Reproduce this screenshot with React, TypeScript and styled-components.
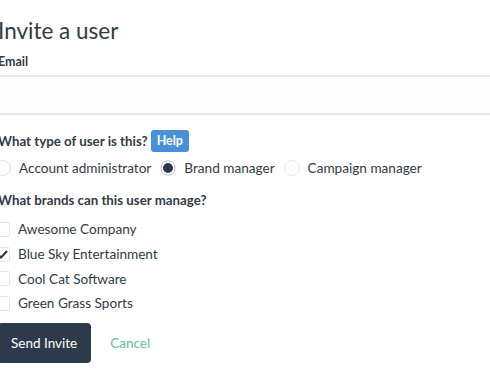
import React from 'react';
import styled, { createGlobalStyle } from 'styled-components';

const Global = createGlobalStyle`
  body {
    margin: 0;
    background: #fff;
    font-family: Lato, "Open Sans", sans-serif;
    color: #313b45;
    overflow: hidden;
  }
`;

const Form = styled.form`
  width: 520px;
  margin-left: -2px;
  padding-top: 16px;
`;

const Title = styled.h1`
  margin: 0;
  font-size: 22.5px;
  line-height: 30px;
  font-weight: 400;
`;

const Label = styled.label`
  display: block;
  font-size: 12.5px;
  font-weight: 700;
  line-height: 18px;
  margin-top: 7px;
`;

const Input = styled.input`
  display: block;
  box-sizing: border-box;
  width: 100%;
  height: 40px;
  margin-top: 4px;
  border: 2px solid #e3e7e9;
  border-left: none;
  border-right: none;
  background: #fdfdfd;
  font: inherit;
  outline: none;
`;

const Question = styled.div<{ $top: number }>`
  display: flex;
  align-items: center;
  gap: 3px;
  margin-top: ${(p) => p.$top}px;
  font-size: 13.3px;
  font-weight: 700;
  line-height: 22px;
`;

const Help = styled.span`
  background: #4a90d9;
  color: #fff;
  font-size: 12.5px;
  font-weight: 700;
  border-radius: 3px;
  padding: 0 6px;
  line-height: 22px;
`;

const RadioRow = styled.div`
  display: flex;
  align-items: center;
  margin-top: 5px;
  height: 22px;
`;

const Option = styled.label`
  display: flex;
  align-items: center;
  gap: 8px;
  font-size: 13.6px;
  margin-right: 12px;
`;

const Radio = styled.span<{ $on?: boolean }>`
  box-sizing: border-box;
  width: 16px;
  height: 16px;
  border-radius: 50%;
  border: 1px solid #e2e6e9;
  background: ${(p) => (p.$on ? '#2c3848' : '#fff')};
  box-shadow: ${(p) => (p.$on ? 'inset 0 0 0 2px #fff' : 'none')};
  &:first-child {
    margin-left: -3px;
  }
`;

const List = styled.div`
  display: flex;
  flex-direction: column;
  margin-top: 6px;
`;

const CheckRow = styled.label`
  display: flex;
  align-items: center;
  gap: 8px;
  height: 24.7px;
  font-size: 13.6px;
`;

const Box = styled.span`
  box-sizing: border-box;
  width: 15px;
  height: 15px;
  margin-left: -3px;
  border: 1px solid #e2e6e9;
  border-radius: 2px;
  display: flex;
  align-items: center;
  justify-content: center;
`;

const Actions = styled.div`
  display: flex;
  align-items: center;
  gap: 19px;
  margin-top: 7px;
`;

const Send = styled.button`
  background: #2d3a4b;
  color: #fff;
  border: none;
  border-radius: 4px;
  height: 40px;
  padding: 0 14px 0 13px;
  font-family: inherit;
  font-size: 13.5px;
`;

const Cancel = styled.a`
  color: #63bda2;
  font-size: 13.5px;
`;

const brands = [
  { name: 'Awesome Company', on: false },
  { name: 'Blue Sky Entertainment', on: true },
  { name: 'Cool Cat Software', on: false },
  { name: 'Green Grass Sports', on: false },
];

const App: React.FC = () => (
  <>
    <Global />
    <Form>
      <Title>Invite a user</Title>
      <Label>Email</Label>
      <Input type="email" />
      <Question $top={15}>
        What type of user is this? <Help>Help</Help>
      </Question>
      <RadioRow>
        <Option><Radio />Account administrator</Option>
        <Option><Radio $on />Brand manager</Option>
        <Option><Radio />Campaign manager</Option>
      </RadioRow>
      <Question $top={10}>What brands can this user manage?</Question>
      <List>
        {brands.map((b) => (
          <CheckRow key={b.name}>
            <Box>
              {b.on && (
                <svg width="11" height="9" viewBox="0 0 11 9">
                  <path d="M1 4.5 L4 7.5 L10 1" fill="none" stroke="#2c3848" strokeWidth="2" />
                </svg>
              )}
            </Box>
            {b.name}
          </CheckRow>
        ))}
      </List>
      <Actions>
        <Send type="button">Send Invite</Send>
        <Cancel>Cancel</Cancel>
      </Actions>
    </Form>
  </>
);

export default App;
